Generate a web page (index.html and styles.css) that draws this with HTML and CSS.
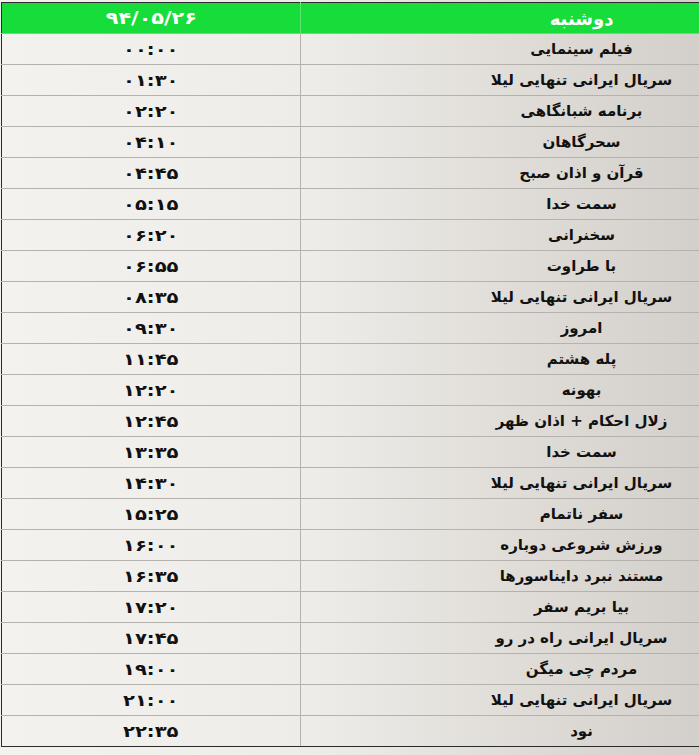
FILE: index.html
```html
<!DOCTYPE html>
<html lang="fa">
<head>
<meta charset="utf-8">
<title>جدول پخش</title>
<link rel="stylesheet" href="styles.css">
</head>
<body>
<table class="sched">
  <thead>
    <tr><th class="c-time"><span class="t">۹۴/۰۵/۲۶</span></th><th class="c-name">دوشنبه</th></tr>
  </thead>
  <tbody>
    <tr><td class="c-time"><span class="t">۰۰:۰۰</span></td><td class="c-name">فیلم سینمایی</td></tr>
    <tr><td class="c-time"><span class="t">۰۱:۳۰</span></td><td class="c-name">سریال ایرانی تنهایی لیلا</td></tr>
    <tr><td class="c-time"><span class="t">۰۲:۲۰</span></td><td class="c-name">برنامه شبانگاهی</td></tr>
    <tr><td class="c-time"><span class="t">۰۴:۱۰</span></td><td class="c-name">سحرگاهان</td></tr>
    <tr><td class="c-time"><span class="t">۰۴:۴۵</span></td><td class="c-name">قرآن و اذان صبح</td></tr>
    <tr><td class="c-time"><span class="t">۰۵:۱۵</span></td><td class="c-name">سمت خدا</td></tr>
    <tr><td class="c-time"><span class="t">۰۶:۲۰</span></td><td class="c-name">سخنرانی</td></tr>
    <tr><td class="c-time"><span class="t">۰۶:۵۵</span></td><td class="c-name">با طراوت</td></tr>
    <tr><td class="c-time"><span class="t">۰۸:۳۵</span></td><td class="c-name">سریال ایرانی تنهایی لیلا</td></tr>
    <tr><td class="c-time"><span class="t">۰۹:۳۰</span></td><td class="c-name">امروز</td></tr>
    <tr><td class="c-time"><span class="t">۱۱:۴۵</span></td><td class="c-name">پله هشتم</td></tr>
    <tr><td class="c-time"><span class="t">۱۲:۲۰</span></td><td class="c-name">بهونه</td></tr>
    <tr><td class="c-time"><span class="t">۱۲:۴۵</span></td><td class="c-name">زلال احکام + اذان ظهر</td></tr>
    <tr><td class="c-time"><span class="t">۱۳:۳۵</span></td><td class="c-name">سمت خدا</td></tr>
    <tr><td class="c-time"><span class="t">۱۴:۳۰</span></td><td class="c-name">سریال ایرانی تنهایی لیلا</td></tr>
    <tr><td class="c-time"><span class="t">۱۵:۲۵</span></td><td class="c-name">سفر ناتمام</td></tr>
    <tr><td class="c-time"><span class="t">۱۶:۰۰</span></td><td class="c-name">ورزش شروعی دوباره</td></tr>
    <tr><td class="c-time"><span class="t">۱۶:۳۵</span></td><td class="c-name">مستند نبرد دایناسورها</td></tr>
    <tr><td class="c-time"><span class="t">۱۷:۲۰</span></td><td class="c-name">بیا بریم سفر</td></tr>
    <tr><td class="c-time"><span class="t">۱۷:۴۵</span></td><td class="c-name">سریال ایرانی راه در رو</td></tr>
    <tr><td class="c-time"><span class="t">۱۹:۰۰</span></td><td class="c-name">مردم چی میگن</td></tr>
    <tr><td class="c-time"><span class="t">۲۱:۰۰</span></td><td class="c-name">سریال ایرانی تنهایی لیلا</td></tr>
    <tr><td class="c-time"><span class="t">۲۲:۳۵</span></td><td class="c-name">نود</td></tr>
  </tbody>
</table>
</body>
</html>
```
FILE: styles.css
```css
html {
  background: linear-gradient(to right, #f4f2ef 0%, #eeece8 45%, #d3cfca 100%);
  min-height: 100%;
}
body {
  margin: 2px 0 0 1px;
  font-family: "DejaVu Sans", sans-serif;
  overflow: hidden;
}
.sched {
  width: 862px;
  border-collapse: collapse;
  border: 1px solid #2b2b2b;
  table-layout: fixed;
}
.sched th, .sched td {
  text-align: center;
  padding: 0;
  height: 30px;
}
.sched th {
  background: #17dd3a;
  color: #ffffff;
  font-weight: bold;
  font-size: 18px;
  border-bottom: 1px solid #b0ada9;
}
.sched td {
  color: #111;
  font-size: 15px;
  font-weight: bold;
  border-bottom: 1px solid #b5b2ae;
}
.sched .c-time {
  width: 298px;
  border-right: 1px solid #b5b2ae;
}
.sched td.c-time {
  font-size: 16px;
}
.sched th.c-time {
  border-right: 1px solid #5ee46f;
  font-size: 17px;
}
.t {
  display: inline-block;
  transform: scaleX(1.22);
}
.sched .c-name {
  direction: rtl;
}
.sched tbody tr:last-child td {
  border-bottom: 1px solid #2b2b2b;
}
```
